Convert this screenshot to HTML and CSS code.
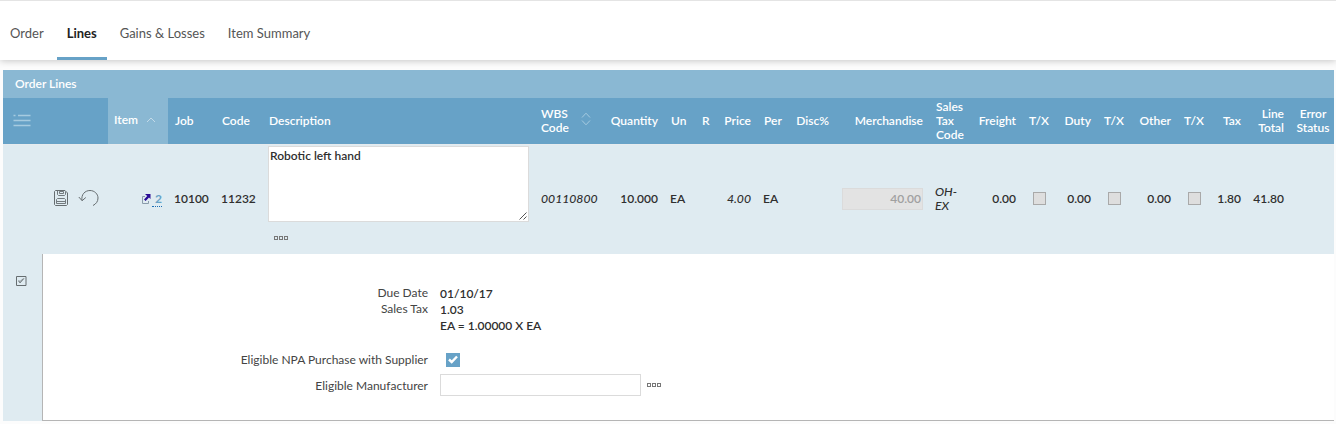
FILE: index.html
```html
<!DOCTYPE html>
<html lang="en">
<head>
<meta charset="utf-8">
<title>Order Lines</title>
<link rel="stylesheet" href="styles.css">
</head>
<body>
<nav class="tabs">
  <a class="tab">Order</a>
  <a class="tab active">Lines</a>
  <a class="tab">Gains &amp; Losses</a>
  <a class="tab">Item Summary</a>
</nav>
<main class="panel">
  <h2 class="title">Order Lines</h2>
  <div class="row head">
    <div class="cell menu"><svg width="18" height="13" viewBox="0 0 18 13"><path d="M0.500 1.500h2M5 1.500h12.500M.5 6.500h17M.5 11.500h17" stroke="#a6cbe0" stroke-width="1.400" fill="none"/></svg></div>
    <div class="cell sorted">Item<svg width="10" height="6" viewBox="0 0 10 6"><path d="M1 5l4-4 4 4" stroke="#c3dae8" fill="none"/></svg></div>
    <div class="cell">Job</div>
    <div class="cell">Code</div>
    <div class="cell">Description</div>
    <div class="cell wbs"><span>WBS<br>Code</span><svg width="10" height="14" viewBox="0 0 10 14"><path d="M1 5.500L5 1.200l4 4.300M1 8.500l4 4.300 4-4.300" stroke="#a6cbe0" fill="none"/></svg></div>
    <div class="cell right">Quantity</div>
    <div class="cell">Un</div>
    <div class="cell">R</div>
    <div class="cell right">Price</div>
    <div class="cell">Per</div>
    <div class="cell right">Disc%</div>
    <div class="cell right">Merchandise</div>
    <div class="cell">Sales<br>Tax<br>Code</div>
    <div class="cell right">Freight</div>
    <div class="cell">T/X</div>
    <div class="cell right">Duty</div>
    <div class="cell">T/X</div>
    <div class="cell right">Other</div>
    <div class="cell">T/X</div>
    <div class="cell right">Tax</div>
    <div class="cell right">Line<br>Total</div>
    <div class="cell center">Error<br>Status</div>
  </div>
  <div class="row line">
    <div class="cell actions">
      <svg width="16" height="18" viewBox="0 0 16 18" fill="none" stroke="#666d70"><path d="M1.500 2.500l1-1h9.500l2.500 2.500v11.500l-1 1h-11l-1-1z"/><path d="M4.500 1.500v4l1 1h6l1-1V2.500M6.500 4.500V2.500h4v2zM3.500 14.500v-4l1-1h7l1 1v4zM4 12.500h8"  stroke-width=".9"/></svg>
      <svg width="21" height="18" viewBox="0 0 21 18" fill="none" stroke="#666d70"><path d="M4 11.500C3 5.500 7 1.500 12 1.500c4.500 0 8 3.500 8 7.500 0 3.500-2 6-5 7.500M.8 8l3.300 3.700L7.800 8.500"/></svg>
    </div>
    <div class="cell right item"><svg width="9" height="10" viewBox="0 0 9 10"><path d="M3 2.500H.500v7h6V7" stroke="#8a9cab" fill="none"/><path d="M3 0h5.500v5L7 3.600 3.600 7 2 5.400 5.200 2z" fill="#2a0c96"/></svg><a class="link">&nbsp;2</a></div>
    <div class="cell">10100</div>
    <div class="cell">11232</div>
    <div class="cell desc"><div class="textarea">Robotic left hand<svg class="grip" width="8" height="8" viewBox="0 0 8 8"><path d="M.5 7.500l7-7M4.500 7.500l3-3" stroke="#555" fill="none"/></svg></div><span class="dots"><i></i><i></i><i></i></span></div>
    <div class="cell italic">00110800</div>
    <div class="cell right">10.000</div>
    <div class="cell">EA</div>
    <div class="cell"></div>
    <div class="cell right italic">4.00</div>
    <div class="cell">EA</div>
    <div class="cell"></div>
    <div class="cell right"><div class="disabled">40.00</div></div>
    <div class="cell italic">OH-<br>EX</div>
    <div class="cell right">0.00</div>
    <div class="cell"><span class="box"></span></div>
    <div class="cell right">0.00</div>
    <div class="cell"><span class="box"></span></div>
    <div class="cell right">0.00</div>
    <div class="cell"><span class="box"></span></div>
    <div class="cell right">1.80</div>
    <div class="cell right">41.80</div>
    <div class="cell"></div>
  </div>
  <div class="detail">
    <div class="gutter"><svg width="11" height="10" viewBox="0 0 11 10" fill="none" stroke="#666d70"><path d="M.5 .5h9.500v9H.5z"/><path d="M2.500 5l1.500 2 4-4.500M2.500 4.500l1.500 1 3.500-3" stroke-width=".8"/></svg></div>
    <div class="form">
      <div class="label">Due Date</div><div class="value">01/10/17</div>
      <div class="label">Sales Tax</div><div class="value">1.03</div>
      <div class="label"></div><div class="value">EA = 1.00000 X EA</div>
      <div class="label tall">Eligible NPA Purchase with Supplier</div><div class="value tall"><span class="check"><svg width="10" height="9" viewBox="0 0 10 9"><path d="M1 4.500L3.700 7 9 1.500" stroke="#fff" stroke-width="2.400" fill="none"/></svg></span></div>
      <div class="label last">Eligible Manufacturer</div><div class="value entry"><span class="input"></span><span class="dots"><i></i><i></i><i></i></span></div>
    </div>
  </div>
</main>
</body>
</html>
```
FILE: styles.css
```css
* { box-sizing: border-box; }
body {
  margin: 0;
  height: 424px;
  overflow: hidden;
  background: #fcfcfc;
  font: 600 12px/14px Lato, "Liberation Sans", sans-serif;
  color: #2f2f2f;
}
svg { display: block; flex: none; }
.tabs {
  display: flex;
  height: 60px;
  padding: 9px 0 0;
  border-top: 1px solid #e4e4e4;
  background: #fff;
  box-shadow: 0 1px 7px rgba(0, 0, 0, .22);
}
.tab {
  display: flex;
  align-items: center;
  height: 50px;
  padding: 1px 10px 2px;
  margin-right: 3px;
  border-bottom: 3px solid transparent;
  font-size: 13px;
  font-weight: 400;
  color: #555;
}
.active { font-weight: 700; color: #222; border-bottom-color: #67a2c7; }
.panel { width: 1331px; margin: 10px 0 0 3px; }
.title {
  display: flex;
  align-items: center;
  height: 28px;
  margin: 0;
  padding-left: 12px;
  background: #8ab8d3;
  color: #fff;
  font-size: 12px;
  font-weight: 600;
}
.row {
  display: grid;
  grid-template-columns: 105px 60px 47px 47px 273px 69px 60px 31px 23px 39px 33px 45px 94px 43px 50px 34px 41px 34px 46px 34px 36px 43px 44px;
}
.cell { display: flex; align-items: center; padding: 0 6px; white-space: nowrap; }
.right { justify-content: flex-end; text-align: right; }
.center { justify-content: center; text-align: center; }
.italic { font-style: italic; font-weight: 500; font-size: 12.2px; }
.head { height: 46px; background: #67a2c7; color: #fff; }
.head .cell { padding-left: 7px; }
.head .cell.center { padding: 0 0 0 2px; }
.head .menu { padding: 0 0 2px 10px; }
.head .sorted { gap: 8px; padding: 0 0 2px 6px; background: #8ab8d3; }
.head .wbs { gap: 12px; padding-left: 6px; }
.wbs svg { margin-bottom: 4px; }
.line { height: 110px; background: #dfebf1; border-top: 1px solid #e6ebee; }
.line .cell { padding-bottom: 1px; }
.actions { gap: 9px; padding-left: 50px; }
.line .actions { padding-bottom: 3px; }
.item { gap: 1px; }
.link { color: #67a2c7; border-bottom: 1px dotted #1d6fb5; font-weight: 700; }
.line .desc { flex-direction: column; align-items: flex-start; justify-content: flex-start; padding: 1px 0 0 6px; }
.textarea {
  position: relative;
  width: 261px;
  height: 76px;
  padding: 2px 1px;
  border: 1px solid #dbdbdb;
  background: #fff;
}
.grip { position: absolute; right: 1px; bottom: 1px; }
.dots { display: inline-flex; gap: 1px; }
.dots i { width: 4px; height: 4px; border: 1px solid #777; }
.desc .dots { margin: 14px 0 0 6px; }
.disabled {
  width: 81px;
  height: 22px;
  padding: 3px 1px;
  border: 1px solid #dbdbdb;
  background: #e3e3e3;
  color: #a0a0a0;
}
.box { width: 13px; height: 13px; margin: 0 0 2px 5px; border: 1px solid #a9a9a9; background: #dedede; }
.detail { display: flex; height: 167px; }
.gutter { width: 39px; padding: 22px 0 0 13px; background: #dfebf1; }
.form {
  flex: 1;
  display: grid;
  grid-template-columns: 385px 1fr;
  grid-template-rows: 16px 16px 16px 41px 22px;
  align-content: start;
  column-gap: 12px;
  padding-top: 31px;
  border-left: 1px solid #b5b5b5;
  border-bottom: 1px solid #b5b5b5;
  background: #fff;
}
.label, .value { display: flex; align-items: center; }
.label { justify-content: flex-end; font-weight: 400; color: #444; }
.value { padding-top: 1px; }
.tall { padding-top: 13px; }
.value.tall { padding-top: 12px; }
.label.last { padding-top: 2px; }
.value.entry { padding-top: 0; }
.check { display: grid; place-items: center; width: 14px; height: 14px; margin-left: 6px; background: #67a2c7; }
.input { width: 201px; height: 22px; border: 1px solid #dbdbdb; margin-right: 6px; }
```
